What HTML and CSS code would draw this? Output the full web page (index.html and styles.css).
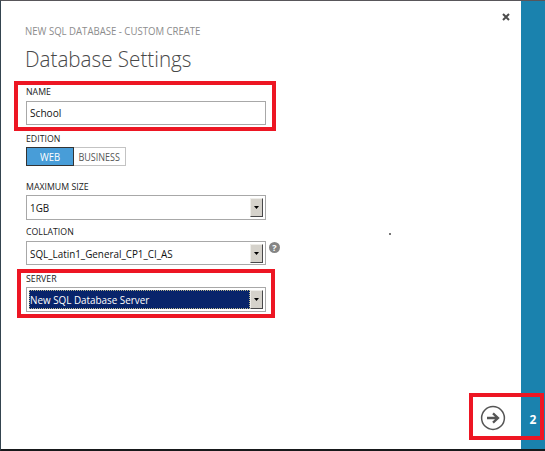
FILE: index.html
```html
<!DOCTYPE html>
<html lang="en">
<head>
<meta charset="utf-8">
<title>Database Settings</title>
<link rel="stylesheet" href="styles.css">
</head>
<body>
<div class="dialog">
  <main class="content">
    <div class="eyebrow"><span>NEW SQL DATABASE - CUSTOM CREATE</span></div>
    <h1><span>Database Settings</span></h1>
    <div class="field name">
      <label><span>NAME</span></label>
      <div class="box"><span class="v-school">School</span></div>
      <i class="mark mark-name"></i>
    </div>
    <div class="field edition">
      <label><span>EDITION</span></label>
      <div class="toggle"><b><span>WEB</span></b><em><span>BUSINESS</span></em></div>
    </div>
    <div class="field size">
      <label><span>MAXIMUM SIZE</span></label>
      <div class="box select"><span>1GB</span><i class="drop"><svg width="5" height="3"><path d="M0 0H5L2.5 3Z"/></svg></i></div>
    </div>
    <div class="field collation">
      <label><span>COLLATION</span></label>
      <div class="box select"><span>SQL_Latin1_General_CP1_CI_AS</span><i class="drop"><svg width="5" height="3"><path d="M0 0H5L2.5 3Z"/></svg></i></div>
      <i class="help">?</i>
    </div>
    <div class="field server">
      <label><span>SERVER</span></label>
      <div class="box select"><div class="chosen"><span>New SQL Database Server</span></div><i class="drop"><svg width="5" height="3"><path d="M0 0H5L2.5 3Z"/></svg></i></div>
      <i class="mark mark-server"></i>
    </div>
  </main>
  <i class="speck"></i>
  <svg class="close" width="8" height="8" viewBox="0 0 8 8"><path d="M1 1L7 7M7 1L1 7"/></svg>
  <svg class="next" width="26" height="26" viewBox="0 0 26 26"><circle cx="13" cy="13" r="11.4"/><path class="arrow" d="M7 13H18M13 8.3L18 13L13 17.7"/></svg>
  <aside><span>2</span></aside>
  <i class="mark mark-next"></i>
</div>
</body>
</html>
```
FILE: styles.css
```css
* { box-sizing: border-box; }
body { margin: 0; font-family: "Open Sans", "Noto Sans", sans-serif; background: #fff; }
.dialog {
  position: relative;
  display: flex;
  width: 545px;
  height: 451px;
  border-left: 1px solid #34444f;
  border-top: 1px solid #58565a;
  border-bottom: 2px solid #17191b;
  overflow: hidden;
}
.content { flex: 1; padding: 22px 0 0 25px; }
span { display: inline-block; white-space: nowrap; transform-origin: 0 50%; }
.eyebrow { height: 16px; margin-left: -1px; font-size: 10.5px; line-height: 16px; color: #8c8c8c; }
.eyebrow span { transform: scaleX(.913); }
h1 { margin: 4px 0 0 -1px; height: 32px; font-size: 22.5px; line-height: 32px; font-weight: 300; color: #484848; }
h1 span { transform: scaleX(.917); }
.field { position: relative; width: 240px; }
label { display: block; height: 16px; font-size: 9.8px; line-height: 17px; color: #222; }
label span { transform: scaleX(.895); }
.box { height: 25px; border: 1px solid #a8a8a8; padding-left: 3px; font-size: 11.5px; line-height: 22px; color: #111; }
.box span { transform: scaleX(.857); }
.box .v-school { transform: scaleX(.88); }
.name { margin-top: 8px; }
.name .box { margin-top: 2px; height: 24px; }
.edition { margin-top: 5px; }
.toggle { display: flex; margin-top: 1px; width: 100px; height: 19px; font-size: 10.5px; line-height: 18px; text-align: center; }
.toggle span { transform-origin: 50% 50%; transform: scaleX(.86); }
.toggle b { width: 48px; border: 1px solid #333; background: #489dd8; color: #fff; font-weight: 400; }
.toggle b span { transform: scaleX(.9); }
.toggle em { flex: 1; border: 1px solid #c3c3c3; border-left: 0; font-style: normal; color: #555; }
.size { margin-top: 12px; }
.size .box { margin-top: 1px; }
.collation { margin-top: 3px; }
.collation .box { margin-top: 2px; height: 24px; }
.server { margin-top: 5px; }
.server .box { margin-top: 1px; }
.select { display: flex; padding: 2px 2px 2px 3px; line-height: 20px; }
.drop {
  display: flex;
  align-items: center;
  justify-content: center;
  margin-left: auto;
  width: 13px;
  height: 19px;
  background: #d5d2cb;
  border: 1px solid #eeede9;
  border-right-color: #48484a;
  border-bottom-color: #48484a;
}
.chosen { flex: 1; margin: 0 0 0 -1px; height: 19px; padding-left: 1px; background: #08246b; outline: 1px dotted #b8b68d; outline-offset: -1px; color: #fff; line-height: 19px; }
.help {
  position: absolute;
  left: 243px;
  top: 19px;
  width: 11px;
  height: 11px;
  border-radius: 50%;
  background: #858585;
  color: #fff;
  font: bold 9px/11px "Open Sans", sans-serif;
  text-align: center;
}
.mark { position: absolute; border: 4px solid #ed1623; }
.mark-name { left: -12px; top: -2px; width: 262px; height: 50px; }
.mark-server { left: -9px; top: -1px; width: 258px; height: 49px; }
.mark-next { left: 468px; top: 392px; width: 75px; height: 47px; }
.speck { position: absolute; left: 388px; top: 232px; width: 2px; height: 2px; background: #777; }
.close { position: absolute; left: 501px; top: 12px; fill: none; stroke: #4c4c4c; stroke-width: 2; }
.next { position: absolute; left: 479px; top: 404px; fill: none; stroke: #555; stroke-width: 1.5; }
.arrow { stroke-width: 2.3; }
aside { width: 24px; padding-top: 409px; background: #1a82ae; color: #fff; font-size: 12px; font-weight: 700; line-height: 20px; text-align: center; }
```
